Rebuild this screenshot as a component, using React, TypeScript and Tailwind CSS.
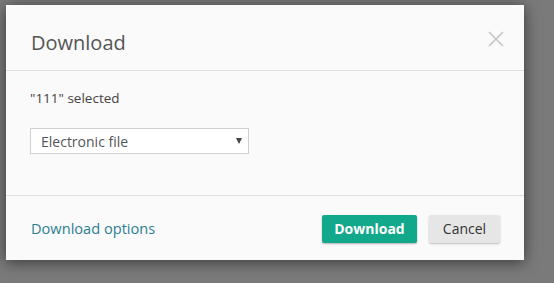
import { useState } from 'react';

// Download dialog shown over a dimmed page
export default function App() {
  const [format, setFormat] = useState('Electronic file');

  return (
    <div className="h-[283px] w-full overflow-hidden bg-[#7a7a7a] pt-[5px] pl-[6px]" style={{ fontFamily: '"Open Sans", sans-serif' }}>
      <div className="flex h-[255px] w-[518px] flex-col bg-[#fafafa] shadow-[0_2px_14px_rgba(0,0,0,0.55)]">
        <div className="flex h-[66px] shrink-0 items-center justify-between border-b border-[#dedede] pt-[11px] pr-[20px] pl-[25px]">
          <h2 className="text-[20px] leading-7 text-[#555]">Download</h2>
          <button className="-mt-[8px] text-[#c6c6c6]" aria-label="Close">
            <svg width="16" height="16" viewBox="0 0 16 16" fill="none" stroke="currentColor" strokeWidth="1.6">
              <path d="M1 1 L15 15 M15 1 L1 15" />
            </svg>
          </button>
        </div>

        <div className="flex-1 border-b border-[#dedede] px-[24px] pt-[17px]">
          <p className="text-[13.5px] leading-5 text-[#444]">"111" selected</p>
          <div className="relative mt-[20px] w-[219px]">
            <select
              value={format}
              onChange={e => setFormat(e.target.value)}
              className="h-[26px] w-full appearance-none border border-[#cfcfcf] bg-white pl-[10px] text-[14px] text-[#555] outline-none"
            >
              <option>Electronic file</option>
              <option>PDF</option>
            </select>
            <span className="pointer-events-none absolute top-[10px] right-[7px] h-0 w-0 border-x-[3.5px] border-t-[6px] border-x-transparent border-t-[#444]" />
          </div>
        </div>

        <div className="flex h-[64px] shrink-0 items-center justify-between pr-[24px] pl-[25px] pt-[1px]">
          <a href="#" className="text-[14.6px] font-medium text-[#2b7f93]">Download options</a>
          <div className="flex gap-[12px]">
            <button className="h-[28px] w-[95px] rounded-[2px] bg-[#11a88b] text-[14px] font-bold text-white shadow-[0_1px_2px_rgba(0,0,0,0.3)]">
              Download
            </button>
            <button className="h-[28px] w-[71px] rounded-[2px] bg-[#e6e6e6] text-[14px] text-[#333] shadow-[0_1px_2px_rgba(0,0,0,0.25)]">
              Cancel
            </button>
          </div>
        </div>
      </div>
    </div>
  );
}
